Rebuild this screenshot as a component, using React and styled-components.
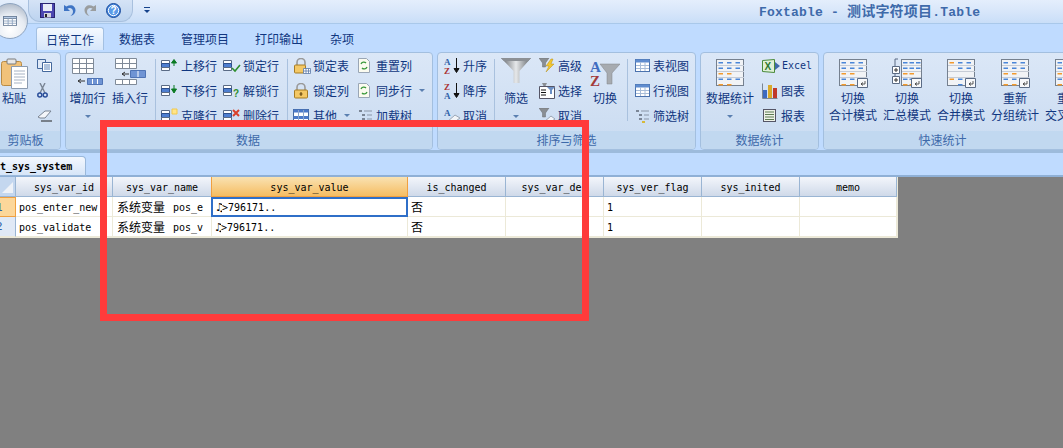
import React from 'react';
import styled, { createGlobalStyle } from 'styled-components';

const Global = createGlobalStyle`
  html, body { margin: 0; padding: 0; background: #808080; }
  body { font-family: "Noto Sans CJK SC", "Liberation Sans", sans-serif; font-size: 12px; }
  * { box-sizing: border-box; }
`;

const NAVY = '#103680';
const MONO = '"DejaVu Sans Mono", "Noto Sans CJK SC", monospace';

const Page = styled.div`
  position: relative;
  width: 1063px;
  height: 448px;
  overflow: hidden;
  background: #808080;
`;

const TitleBar = styled.div`
  height: 24px;
  display: flex;
  align-items: center;
  background: linear-gradient(#e4eefc, #d9e7fa 45%, #c9def8);
  border-bottom: 1px solid #a9c8ea;
  padding-left: 28px;
`;

const Qat = styled.div`
  flex: none;
  display: flex;
  align-items: center;
  width: 105px;
  height: 22px;
  margin-top: -2px;
  padding-left: 11px;
  gap: 8px;
  background: linear-gradient(#d5e3f6, #bcd3ef);
  border: 1px solid #a8c0de;
  border-top: none;
  border-radius: 0 0 12px 12px / 0 0 12px 12px;

  svg { flex: none; }
`;

const QatMenu = styled.div`
  flex: none;
  margin-left: 15px;
  width: 6px;
  height: 6px;
  border-top: 1px solid #15428b;
  position: relative;
  &::after {
    content: '';
    position: absolute;
    left: 0;
    top: 2px;
    border: 3px solid transparent;
    border-top: 3px solid #15428b;
    border-bottom: none;
  }
`;

const Title = styled.div`
  margin-left: 626px;
  margin-top: -3px;
  font-family: "Liberation Mono", "Noto Sans CJK SC", monospace;
  font-weight: 700;
  font-size: 13px;
  letter-spacing: 0.2px;
  color: #3e6aaa;
  white-space: nowrap;
`;

const TitleCjk = styled.span`
  font-family: "Noto Sans CJK SC", sans-serif;
  font-size: 14px;
`;

const Orb = styled.div`
  position: absolute;
  left: -8px;
  top: 3px;
  width: 36px;
  height: 36px;
  border-radius: 50%;
  background: radial-gradient(circle at 50% 75%, #ffffff, #e6ebf2 50%, #a9b4c4 90%);
  border: 1px solid #8ea4c0;
  display: flex;
  align-items: center;
  justify-content: center;
`;

const TabRow = styled.div`
  height: 26px;
  display: flex;
  align-items: flex-end;
  padding-left: 36px;
  background: #bfdbff;
`;

const Tab = styled.div`
  height: 23px;
  width: ${(p) => p.$w}px;
  display: flex;
  align-items: center;
  justify-content: center;
  color: ${NAVY};
  font-size: 12px;
  border-radius: 3px 3px 0 0;
  ${(p) => p.$active && `
    background: linear-gradient(#f4f9ff, #d6e6fa);
    border: 1px solid #a3c0e2;
    border-bottom: none;
  `}
`;

const Ribbon = styled.div`
  height: 103px;
  display: flex;
  gap: 4px;
  padding-top: 2px;
  background: #bfdbff;
  border-bottom: 3px solid #9dbbdc;
  overflow: hidden;
`;

const Group = styled.div`
  flex: none;
  width: ${(p) => p.$w}px;
  margin-left: ${(p) => p.$ml || 0}px;
  height: 98px;
  display: flex;
  flex-direction: column;
  border: 1px solid #a3bfdf;
  border-radius: 4px;
  background: linear-gradient(#dbe7f7, #c9dbf1);
  overflow: hidden;
`;

const GroupBody = styled.div`
  height: 79px;
  display: flex;
  padding-left: ${(p) => p.$pl || 0}px;
`;

const GroupLabel = styled.div`
  height: 18px;
  line-height: 17px;
  text-align: center;
  background: #c1d8f0;
  color: #3e6aaa;
  font-size: 12px;
  padding-right: ${(p) => p.$pr || 0}px;
`;

const Big = styled.div`
  flex: none;
  width: ${(p) => p.$w}px;
  padding-top: 5px;
  display: flex;
  flex-direction: column;
  align-items: center;
  color: ${NAVY};
  font-size: 12px;
  line-height: 17px;
  white-space: nowrap;
`;

const BigIcon = styled.div`
  height: 31px;
  display: flex;
  align-items: flex-start;
  justify-content: center;
`;

const Caret = styled.div`
  margin-top: 9px;
  width: 0;
  border: 3px solid transparent;
  border-top: 3px solid #5a7fb0;
  border-bottom: none;
`;

const Col = styled.div`
  flex: none;
  width: ${(p) => p.$w}px;
  margin-left: ${(p) => p.$ml || 0}px;
  display: flex;
  flex-direction: column;
`;

const Small = styled.div`
  height: 25px;
  display: flex;
  align-items: center;
  gap: 2px;
  color: ${NAVY};
  font-size: ${(p) => (p.$mono ? 10 : 12)}px;
  white-space: nowrap;
  font-family: ${(p) => (p.$mono ? MONO : 'inherit')};
`;

const SmallCaret = styled(Caret)`
  margin: 0 0 0 5px;
`;

const Sep = styled.div`
  flex: none;
  width: 1px;
  height: 62px;
  margin: 6px ${(p) => p.$r}px 0 ${(p) => p.$l}px;
  background: #a9c1de;
`;

const SheetBar = styled.div`
  height: 24px;
  display: flex;
  align-items: flex-end;
  background: #bfdbff;
  border-bottom: 2px solid #8fb0d6;
`;

const SheetTab = styled.div`
  width: 86px;
  height: 20px;
  margin-bottom: -1px;
  background: linear-gradient(#f4f8fe, #d6e5f8);
  border: 1px solid #9ab8da;
  border-left: none;
  border-radius: 0 4px 0 0;
  font-family: ${MONO};
  font-weight: 700;
  font-size: 10px;
  line-height: 20px;
  color: #000;
`;

const Grid = styled.div`
  width: 898px;
  display: flex;
  flex-direction: column;
  background: #fff;
  font-family: ${MONO};
  font-size: 10px;
  border-bottom: 1px solid #ece9d8;
  border-right: 1px solid #ece9d8;
`;

const Row = styled.div`
  height: 20px;
  display: grid;
  grid-template-columns: 16px 97px 99px 196px 98px 98px 98px 98px 97px;
`;

const Corner = styled.div`
  background: #c4d7ef;
  border-right: 1px solid #9ab5d3;
  border-bottom: 1px solid #9ab5d3;
  display: flex;
  align-items: flex-end;
  justify-content: flex-end;
  padding: 0 2px 3px 0;
  &::after {
    content: '';
    width: 0;
    border-left: 11px solid transparent;
    border-bottom: 11px solid #eef2f8;
  }
`;

const Head = styled.div`
  display: flex;
  align-items: center;
  justify-content: center;
  padding-top: 2px;
  color: #000;
  white-space: nowrap;
  overflow: hidden;
  background: ${(p) => (p.$active ? 'linear-gradient(#f9e2b2, #f6bd62)' : 'linear-gradient(#f3f6fb, #cfd9e9)')};
  border-right: 1px solid ${(p) => (p.$active ? '#f0a040' : '#9ab5d3')};
  border-bottom: 1px solid ${(p) => (p.$active ? '#f0a040' : '#9ab5d3')};
  ${(p) => p.$active && 'border-left: 1px solid #f0a040; margin-left: -1px;'}
`;

const RowHead = styled.div`
  color: #2f62a8;
  font-size: 11px;
  line-height: 19px;
  text-indent: -4px;
  overflow: hidden;
  background: ${(p) => (p.$active ? '#fcd79a' : '#e0e9f6')};
  border: ${(p) => (p.$active ? '1px solid #f0a040' : 'none')};
  border-left: none;
  border-right: 1px solid ${(p) => (p.$active ? '#f0a040' : '#9ab5d3')};
  border-bottom: 1px solid ${(p) => (p.$active ? '#f0a040' : '#ece9d8')};
`;

const Cell = styled.div`
  padding: 2px 0 0 ${(p) => p.$pl ?? 3}px;
  display: flex;
  align-items: center;
  color: #000;
  white-space: pre;
  overflow: hidden;
  border-right: 1px solid #ece9d8;
  border-bottom: 1px solid #ece9d8;
  ${(p) => p.$active && 'border: 2px solid #2f6fc8; margin-left: -1px; padding-top: 0;'}
`;

const Cjk = styled.span`
  font-family: "Noto Sans CJK SC", sans-serif;
  font-size: 12px;
  margin: -3px ${(p) => p.$gap || 0}px 0 0;
`;

const Note = styled.span`
  font-family: "DejaVu Sans", sans-serif;
  font-size: 11px;
  font-weight: 700;
  width: 7px;
  overflow: hidden;
`;

const RedBox = styled.div`
  position: absolute;
  left: 100px;
  top: 120px;
  width: 489px;
  height: 201px;
  border: 7px solid #ff3b3b;
  pointer-events: none;
`;

/* ---------- icons ---------- */

const TableGlyph = () => (
  <svg width="14" height="10" viewBox="0 0 15 12" preserveAspectRatio="none">
    <rect x="0.5" y="0.5" width="14" height="11" fill="#fff" stroke="#6c7f99" />
    <rect x="0.5" y="0.5" width="14" height="2.5" fill="#b7cbe6" stroke="#6c7f99" />
    <path d="M5.500 3v8M10 3v8M1 6h13M1 8.700h13" stroke="#8ea3bf" fill="none" />
  </svg>
);

const Save = () => (
  <svg width="15" height="15" viewBox="0 0 15 15">
    <rect x="0.5" y="0.5" width="14" height="14" fill="#4b46b0" stroke="#2a2470" />
    <rect x="3" y="1" width="9" height="7" fill="#e8ecf6" />
    <rect x="4" y="10" width="7" height="4.500" fill="#d3d3dd" />
    <rect x="5" y="11" width="2" height="3" fill="#222" />
  </svg>
);

const Curve = ({ color, flip }) => (
  <svg width="13" height="14" viewBox="0 0 13 14" style={flip ? { transform: 'scaleX(-1)' } : undefined}>
    <path d="M1 2v6h6L4.500 5.600C7 4 10 5.500 10 8.500c0 2-1 3.400-2.500 4.500 3-.5 5-3 5-5.500C12.500 3 8 .7 3.400 3.600z" fill={color} />
  </svg>
);

const Help = () => (
  <svg width="15" height="15" viewBox="0 0 15 15" style={{ marginLeft: 1 }}>
    <circle cx="7.500" cy="7.500" r="7" fill="#3d7fd9" stroke="#1f4f9e" />
    <circle cx="7.500" cy="7.500" r="5.200" fill="#5b9be8" stroke="#fff" />
    <text x="7.500" y="11" textAnchor="middle" fontSize="10" fontWeight="700" fontFamily="Liberation Sans" fill="#fff">?</text>
  </svg>
);

const Paste = () => (
  <svg width="27" height="31" viewBox="0 0 27 31">
    <rect x="0.5" y="3.500" width="20" height="24" rx="2" fill="#f1c27a" stroke="#b98b44" />
    <rect x="6" y="1" width="9" height="5" rx="1" fill="#e8e8e8" stroke="#7b7b7b" />
    <path d="M10.500 8.500h16v22h-16z" fill="#fff" stroke="#8b9bb0" />
    <path d="M13 13h11M13 16h11M13 19h11M13 22h11M13 25h8" stroke="#a7b3c4" />
  </svg>
);

const Copy = () => (
  <svg width="15" height="13" viewBox="0 0 15 13">
    <path d="M.5.5h8v9h-8z" fill="#dfe9f7" stroke="#44689c" />
    <path d="M5.500 3.500h9v9h-9z" fill="#fff" stroke="#44689c" />
    <path d="M7 6h6M7 8h6M7 10h6" stroke="#5f86bb" />
  </svg>
);

const Scissors = () => (
  <svg width="11" height="15" viewBox="0 0 11 15">
    <path d="M3 0l5 10M8 0L3 10" stroke="#7a8594" strokeWidth="1.400" fill="none" />
    <circle cx="2.800" cy="12" r="2" fill="none" stroke="#2b4f9a" strokeWidth="1.500" />
    <circle cx="8.200" cy="12" r="2" fill="none" stroke="#2b4f9a" strokeWidth="1.500" />
  </svg>
);

const Eraser = () => (
  <svg width="15" height="12" viewBox="0 0 15 12">
    <path d="M1 7l7-6h6L8 8H3z" fill="#f4f6fa" stroke="#7a8594" />
    <path d="M4 11h11" stroke="#222" />
  </svg>
);

const AddRow = ({ insert }) => (
  <svg width="32" height="27" viewBox="0 0 32 27">
    {insert ? (
      <>
        <path d="M1.500 .5h21v10h-21zM1.500 5.500h21M8.500 .5v10M15.500 .5v10" fill="#fff" stroke="#7f8a98" />
        <path d="M8 16h7M8 16l3-2M8 16l3 2" stroke="#333" fill="none" />
        <path d="M16.500 12.500h15v7h-15z" fill="#6f94d4" stroke="#4f74b5" />
        <path d="M24 13v6" stroke="#fff" />
        <path d="M1.500 21.500h21v5h-21zM8.500 21.500v5M15.500 21.500v5" fill="#fff" stroke="#7f8a98" />
      </>
    ) : (
      <>
        <path d="M.5 .5h21v15h-21zM.5 5.500h21M.5 10.500h21M7.500 .5v15M14.500 .5v15" fill="#fff" stroke="#7f8a98" />
        <path d="M6 23h7M6 23l3-2M6 23l3 2" stroke="#333" fill="none" />
        <path d="M15.500 20.500h15v6h-15z" fill="#6f94d4" stroke="#4f74b5" />
        <path d="M20.500 21v5M25.500 21v5" stroke="#fff" />
      </>
    )}
  </svg>
);

const RowBars = () => (
  <>
    <path d="M.5 2.500h8v3h-8z" fill="#fff" stroke="#5a6b85" />
    <path d="M.5 5.500h8v4h-8z" fill="#4f7fd0" stroke="#2e4f8a" />
    <path d="M.5 9.500h8v3h-8z" fill="#fff" stroke="#5a6b85" />
  </>
);

const RowIcon = ({ kind }) => (
  <svg width="18" height="15" viewBox="0 0 18 15">
    <RowBars />
    {kind === 'up' && <path d="M13 8V3M10.500 5L13 1.500 15.500 5z" stroke="#0b7a23" fill="#0b7a23" />}
    {kind === 'down' && <path d="M13 2v6M10.500 6L13 10l2.500-4z" stroke="#0b7a23" fill="#0b7a23" />}
    {kind === 'clone' && <path d="M11 1h5v5h-5z" fill="#ffe58a" stroke="#f2c94c" />}
    {kind === 'check' && <path d="M9 10l3 3 5-6" stroke="#2f8f2f" strokeWidth="1.600" fill="none" />}
    {kind === 'help' && <text x="10" y="14" fontSize="10" fontWeight="700" fontFamily="Liberation Sans" fill="#2f8f2f">?</text>}
    {kind === 'del' && <path d="M10 2l6 6M16 2l-6 6" stroke="#d9412b" strokeWidth="2" />}
  </svg>
);

const Lock = () => (
  <svg width="16" height="16" viewBox="0 0 16 16" style={{ marginRight: 2 }}>
    <path d="M4 7V4.500a4 4 0 0 1 8 0V7" stroke="#9a9a9a" strokeWidth="1.600" fill="none" />
    <rect x="1.500" y="7" width="13" height="8" rx="1" fill="#f4c865" stroke="#a67c25" />
    <path d="M8 9v4M6.500 11h3" stroke="#5a3d0a" />
  </svg>
);

const LockTable = () => (
  <svg width="18" height="16" viewBox="0 0 18 16">
    <path d="M4 7V4.500a4 4 0 0 1 8 0V7" stroke="#9a9a9a" strokeWidth="1.600" fill="none" />
    <rect x="1.500" y="7" width="11" height="8" rx="1" fill="#f4c865" stroke="#a67c25" />
    <path d="M10.500 10.500h7v5h-7zM13 10.500v5M15.500 10.500v5M10.500 13h7" fill="#fff" stroke="#5b7aa8" strokeWidth=".8" />
  </svg>
);

const OtherIcon = () => (
  <svg width="16" height="14" viewBox="0 0 16 14" style={{ marginRight: 2 }}>
    <rect x=".5" y=".5" width="15" height="13" fill="#fff" stroke="#44689c" />
    <path d="M.5 .5h15v3h-15zM.5 7h15v3h-15z" fill="#4a79c9" />
    <path d="M5.500 1v12M10.500 1v12" stroke="#8aa5cc" />
  </svg>
);

const Reset = () => (
  <svg width="12" height="15" viewBox="0 0 12 15" style={{ marginRight: 4 }}>
    <path d="M.5.5h8l3 3v11H.5z" fill="#fbfbf0" stroke="#9aa6b5" />
    <path d="M3 6a3 3 0 0 1 5-1M9 9a3 3 0 0 1-5 1" stroke="#3d9a3d" strokeWidth="1.300" fill="none" />
  </svg>
);

const Tree = () => (
  <svg width="15" height="14" viewBox="0 0 15 14" style={{ marginRight: 1 }}>
    <path d="M1 1h3v2H1zM4 5h3v2H4zM4 9h3v2H4z" fill="#7b8696" />
    <path d="M7 12h3v2H7z" fill="#d6b93a" />
    <path d="M6 2h8M9 6h5M9 10h5" stroke="#8a96a8" />
  </svg>
);

const SortIcon = ({ top, bottom }) => (
  <svg width="17" height="18" viewBox="0 0 17 18">
    <text x="0" y="8" fontSize="9" fontWeight="700" fontFamily="Liberation Serif" fill={top === 'A' ? '#2f62a8' : '#a33'}>{top}</text>
    <text x="0" y="17" fontSize="9" fontWeight="700" fontFamily="Liberation Serif" fill={bottom === 'A' ? '#2f62a8' : '#a33'}>{bottom}</text>
    <path d="M12.500 1v13M10 11.500l2.500 4 2.500-4z" stroke="#111" fill="#111" />
  </svg>
);

const SortClear = () => (
  <svg width="17" height="15" viewBox="0 0 17 15">
    <text x="0" y="8" fontSize="9" fontWeight="700" fontFamily="Liberation Serif" fill="#2f62a8">A</text>
    <path d="M3 14l8-7 5 3-7 5z" fill="#f2f4f8" stroke="#9aa6b5" />
  </svg>
);

const Funnel = () => (
  <svg width="30" height="25" viewBox="0 0 30 25">
    <defs>
      <linearGradient id="fnl" x1="0" x2="1" y1="0" y2="0">
        <stop offset="0" stopColor="#5f6368" />
        <stop offset=".5" stopColor="#e6e8ea" />
        <stop offset="1" stopColor="#606569" />
      </linearGradient>
    </defs>
    <path d="M0 0h30L18.500 13v12h-6V13z" fill="url(#fnl)" />
    <path d="M0 0h30l-3 3H3z" fill="#8c9095" />
  </svg>
);

const MiniFunnel = ({ kind }) => (
  <svg width="17" height="15" viewBox="0 0 17 15">
    <path d="M0 0h10L6.500 5v4h-3V5z" fill="#8a8e93" stroke="#6a6e73" strokeWidth=".5" />
    {kind === 'bolt' && <path d="M12 1L7 8h3l-3 6 8-8h-3l2-5z" fill="#f3c62f" stroke="#b68f16" strokeWidth=".5" />}
    {kind === 'clear' && <path d="M5 14l7-6 4 3-6 4z" fill="#f2f4f8" stroke="#9aa6b5" />}
  </svg>
);

const SelectIcon = () => (
  <svg width="17" height="16" viewBox="0 0 17 16">
    <path d="M.5 3.500h15v12h-15z" fill="#fff" stroke="#556" />
    <path d="M2 7h5M2 9.500h5M2 12h5" stroke="#111" />
    <path d="M8 4h8l-3 3v4h-2V7z" fill="#6b8fc4" />
    <path d="M3 0h5L6.500 3h-2z" fill="#8a8e93" />
  </svg>
);

const SwitchIcon = () => (
  <svg width="30" height="30" viewBox="0 0 30 30">
    <path d="M10 6h20L22 15v11h-5V15z" fill="#a7abb0" stroke="#80848a" strokeWidth=".5" />
    <text x="0" y="14" fontSize="15" fontWeight="700" fontFamily="Liberation Serif" fill="#3f6cc0">A</text>
    <text x="0" y="28" fontSize="15" fontWeight="700" fontFamily="Liberation Serif" fill="#a33b3b">Z</text>
  </svg>
);

const ViewIcon = () => (
  <svg width="15" height="13" viewBox="0 0 15 13" style={{ marginRight: 1 }}>
    <rect x=".5" y=".5" width="14" height="12" fill="#fff" stroke="#4b72ad" />
    <rect x=".5" y=".5" width="14" height="3" fill="#5f8ccf" />
    <path d="M5.500 3v9M10 3v9M1 6.500h13M1 9.500h13" stroke="#a7bcd8" />
  </svg>
);

const DASH = { blue: '#4a86d8', orange: '#f29a2e' };

const StatTable = ({ rows, corner, tree }) => {
  const x0 = tree ? 11 : 3.5;
  const step = tree ? 6.5 : 8.5;
  return (
    <svg width="30" height="30" viewBox="0 0 30 30">
      {tree && <path d="M6 1H3v24" stroke="#5a6b85" fill="none" />}
      {tree && <path d="M.5 8.500h7v7h-7zM.5 18.500h7v7h-7z" fill="#fff" stroke="#5a6b85" />}
      {tree && <path d="M2 12h4M4 10v4M2 22h4M4 20v4" stroke="#333" />}
      <rect x={tree ? 9.5 : 1.5} y="1.500" width={tree ? 20 : 27} height="26" fill="#f1f3f6" stroke="#75808f" />
      {[7, 13, 19].map((y) => (
        <path key={y} d={`M${tree ? 10 : 2} ${y}.500H29`} stroke="#c6ccd6" />
      ))}
      {rows.map((r, y) =>
        r.map((c, x) =>
          c ? <rect key={`${y}-${x}`} x={x0 + x * step} y={4 + y * 5.5} width="4.500" height="1.500" fill={DASH[c]} /> : null
        )
      )}
      {corner && <path d="M19.500 20.500h10v9h-10z" fill="#f7f8fa" stroke="#5a6b85" />}
      {corner && <path d="M27 23v3h-4M23 26l2-1.500M23 26l2 1.500" stroke="#333" fill="none" strokeWidth=".8" />}
    </svg>
  );
};

const b = 'blue';
const o = 'orange';
const FULL = [[b, b, b], [b, b, b], [o, o, 0], [b, b, b], [o, o, 0]];
const MERGED = [[o, b, b], [0, b, b], [0, 0, 0], [o, b, b], [0, b, b]];

const ExcelIcon = () => (
  <svg width="18" height="14" viewBox="0 0 18 14">
    <path d="M.5 1.500l12-1v13l-12-1z" fill="#dff0d8" stroke="#4a8a3a" />
    <text x="2.500" y="11" fontSize="10" fontWeight="700" fontFamily="Liberation Sans" fill="#2f7a2f">X</text>
    <path d="M13 3l5 4-5 4z" fill="#3e6aaa" />
  </svg>
);

const ChartIcon = () => (
  <svg width="16" height="16" viewBox="0 0 16 16" style={{ marginRight: 1 }}>
    <rect x="1" y="7" width="4" height="8" fill="#3e6ac0" />
    <rect x="6" y="2" width="4" height="13" fill="#d9a92a" />
    <rect x="11" y="5" width="4" height="10" fill="#c0392b" />
    <path d="M.5 .5v15h15" fill="none" stroke="#7a8594" />
  </svg>
);

const ReportIcon = () => (
  <svg width="13" height="13" viewBox="0 0 13 13" style={{ margin: '0 3px 0 1px' }}>
    <rect x=".5" y=".5" width="12" height="12" fill="#eef2e8" stroke="#556" />
    <path d="M2 3h9M2 5.500h9M2 8h9M2 10.500h9" stroke="#5d7b52" />
  </svg>
);

/* ---------- data ---------- */

const COLUMNS = ['sys_var_id', 'sys_var_name', 'sys_var_value', 'is_changed', 'sys_var_des', 'sys_ver_flag', 'sys_inited', 'memo'];
const ROWS = [
  { no: 1, id: 'pos_enter_new', name: 'pos_e', active: true },
  { no: 2, id: 'pos_validate', name: 'pos_v' },
];

const SmallBtn = ({ icon, label, caret, mono }) => (
  <Small $mono={mono}>
    {icon}
    {label}
    {caret && <SmallCaret />}
  </Small>
);

const BigBtn = ({ w, icon, lines, caret }) => (
  <Big $w={w}>
    <BigIcon>{icon}</BigIcon>
    {lines.map((l) => (
      <div key={l}>{l}</div>
    ))}
    {caret && <Caret />}
  </Big>
);

export default function App() {
  return (
    <Page>
      <Global />
      <TitleBar>
        <Qat>
          <Save />
          <Curve color="#3f74c4" />
          <Curve color="#9a9d9f" flip />
          <Help />
          <QatMenu />
        </Qat>
        <Title>
          Foxtable - <TitleCjk>测试字符项目</TitleCjk>.Table
        </Title>
      </TitleBar>
      <Orb>
        <TableGlyph />
      </Orb>

      <TabRow>
        <Tab $w={68} $active>日常工作</Tab>
        <Tab $w={66}>数据表</Tab>
        <Tab $w={70}>管理项目</Tab>
        <Tab $w={78}>打印输出</Tab>
        <Tab $w={48}>杂项</Tab>
      </TabRow>

      <Ribbon>
        <Group $w={71} $ml={-10}>
          <GroupBody>
            <BigBtn w={46} icon={<Paste />} lines={['粘贴']} />
            <Col $w={23}>
              <SmallBtn icon={<Copy />} />
              <SmallBtn icon={<Scissors />} />
              <SmallBtn icon={<Eraser />} />
            </Col>
          </GroupBody>
          <GroupLabel>剪贴板</GroupLabel>
        </Group>

        <Group $w={368}>
          <GroupBody>
            <BigBtn w={43} icon={<AddRow />} lines={['增加行']} caret />
            <BigBtn w={42} icon={<AddRow insert />} lines={['插入行']} />
            <Sep $l={4} $r={5} />
            <Col $w={62}>
              <SmallBtn icon={<RowIcon kind="up" />} label="上移行" />
              <SmallBtn icon={<RowIcon kind="down" />} label="下移行" />
              <SmallBtn icon={<RowIcon kind="clone" />} label="克隆行" />
            </Col>
            <Col $w={64}>
              <SmallBtn icon={<RowIcon kind="check" />} label="锁定行" />
              <SmallBtn icon={<RowIcon kind="help" />} label="解锁行" />
              <SmallBtn icon={<RowIcon kind="del" />} label="删除行" />
            </Col>
            <Sep $l={0} $r={5} />
            <Col $w={65}>
              <SmallBtn icon={<LockTable />} label="锁定表" />
              <SmallBtn icon={<Lock />} label="锁定列" />
              <SmallBtn icon={<OtherIcon />} label="其他" caret />
            </Col>
            <Col $w={72}>
              <SmallBtn icon={<Reset />} label="重置列" />
              <SmallBtn icon={<Reset />} label="同步行" caret />
              <SmallBtn icon={<Tree />} label="加载树" />
            </Col>
          </GroupBody>
          <GroupLabel $pr={2}>数据</GroupLabel>
        </Group>

        <Group $w={259}>
          <GroupBody $pl={6}>
            <Col $w={50}>
              <SmallBtn icon={<SortIcon top="A" bottom="Z" />} label="升序" />
              <SmallBtn icon={<SortIcon top="Z" bottom="A" />} label="降序" />
              <SmallBtn icon={<SortClear />} label="取消" />
            </Col>
            <Sep $l={0} $r={0} />
            <BigBtn w={42} icon={<Funnel />} lines={['筛选']} caret />
            <Col $w={48} $ml={2}>
              <SmallBtn icon={<MiniFunnel kind="bolt" />} label="高级" />
              <SmallBtn icon={<SelectIcon />} label="选择" />
              <SmallBtn icon={<MiniFunnel kind="clear" />} label="取消" />
            </Col>
            <BigBtn w={36} icon={<SwitchIcon />} lines={['切换']} />
            <Sep $l={4} $r={7} />
            <Col $w={60}>
              <SmallBtn icon={<ViewIcon />} label="表视图" />
              <SmallBtn icon={<ViewIcon />} label="行视图" />
              <SmallBtn icon={<Tree />} label="筛选树" />
            </Col>
          </GroupBody>
          <GroupLabel>排序与筛选</GroupLabel>
        </Group>

        <Group $w={119}>
          <GroupBody>
            <BigBtn w={58} icon={<StatTable rows={FULL} />} lines={['数据统计']} caret />
            <Col $w={56} $ml={3}>
              <SmallBtn icon={<ExcelIcon />} label="Excel" mono />
              <SmallBtn icon={<ChartIcon />} label="图表" />
              <SmallBtn icon={<ReportIcon />} label="报表" />
            </Col>
          </GroupBody>
          <GroupLabel>数据统计</GroupLabel>
        </Group>

        <Group $w={300}>
          <GroupBody $pl={2}>
            <BigBtn w={54} icon={<StatTable rows={FULL} corner />} lines={['切换', '合计模式']} />
            <BigBtn w={54} icon={<StatTable rows={FULL} corner tree />} lines={['切换', '汇总模式']} />
            <BigBtn w={54} icon={<StatTable rows={MERGED} corner />} lines={['切换', '合并模式']} />
            <BigBtn w={54} icon={<StatTable rows={FULL} corner />} lines={['重新', '分组统计']} />
            <BigBtn w={54} icon={<StatTable rows={FULL} />} lines={['重新', '交叉统计']} />
          </GroupBody>
          <GroupLabel $pr={61}>快速统计</GroupLabel>
        </Group>
      </Ribbon>

      <SheetBar>
        <SheetTab>t_sys_system</SheetTab>
      </SheetBar>

      <Grid>
        <Row>
          <Corner />
          {COLUMNS.map((c) => (
            <Head key={c} $active={c === 'sys_var_value'}>{c}</Head>
          ))}
        </Row>
        {ROWS.map((r) => (
          <Row key={r.no}>
            <RowHead $active={r.active}>{r.no}</RowHead>
            <Cell>{r.id}</Cell>
            <Cell $pl={4}>
              <Cjk $gap={8}>系统变量</Cjk>
              <span>{r.name}</span>
            </Cell>
            <Cell $active={r.active} $pl={2}>
              <Note>♫</Note>
              <span>&gt;796171..</span>
            </Cell>
            <Cell><Cjk>否</Cjk></Cell>
            <Cell />
            <Cell>1</Cell>
            <Cell />
            <Cell />
          </Row>
        ))}
      </Grid>

      <RedBox />
    </Page>
  );
}
